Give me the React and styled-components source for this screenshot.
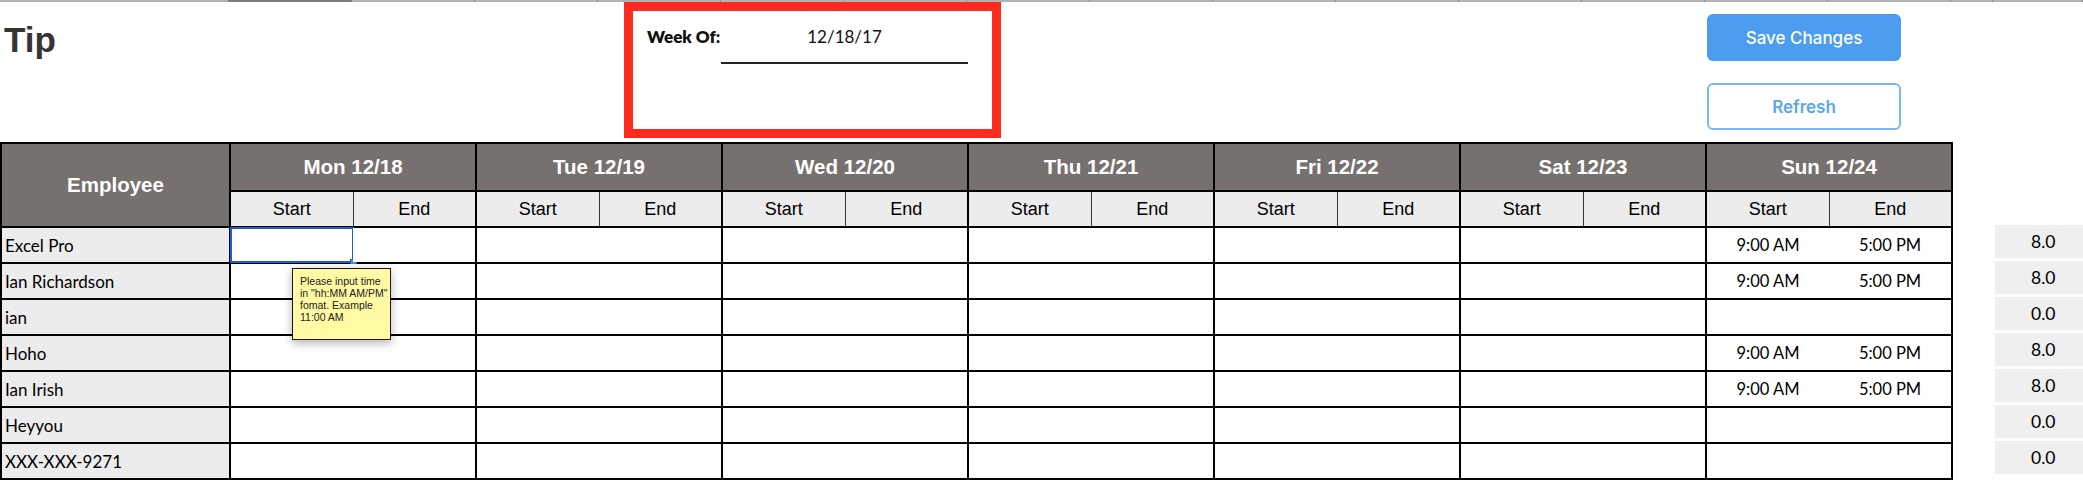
import React from "react";
import styled, { createGlobalStyle } from "styled-components";

const DAYS = [
  "Mon 12/18",
  "Tue 12/19",
  "Wed 12/20",
  "Thu 12/21",
  "Fri 12/22",
  "Sat 12/23",
  "Sun 12/24",
];

const SHIFT = { start: "9:00 AM", end: "5:00 PM" };

const EMPLOYEES = [
  { name: "Excel Pro", sun: SHIFT, total: "8.0" },
  { name: "Ian Richardson", sun: SHIFT, total: "8.0" },
  { name: "ian", sun: null, total: "0.0" },
  { name: "Hoho", sun: SHIFT, total: "8.0" },
  { name: "Ian Irish", sun: SHIFT, total: "8.0" },
  { name: "Heyyou", sun: null, total: "0.0" },
  { name: "XXX-XXX-9271", sun: null, total: "0.0" },
];

// spreadsheet column guides along the top edge
const RULER = [229, ...Array(14).fill(123), 42, 90];

const App = () => {
  return (
    <>
      <GlobalStyle />
      <Page>
        <Ruler>
          {RULER.map((w, i) => (
            <RulerCell key={i} $width={w} $active={i === 1} />
          ))}
        </Ruler>

        <TopArea>
          <Title>Tip</Title>
          <WeekBox>
            <WeekLabel>Week Of:</WeekLabel>
            <WeekField>12/18/17</WeekField>
          </WeekBox>
          <span />
          <Actions>
            <SaveButton type="button">Save Changes</SaveButton>
            <RefreshButton type="button">Refresh</RefreshButton>
          </Actions>
        </TopArea>

        <Body>
          <Sheet>
            <colgroup>
              <col style={{ width: 229 }} />
              {DAYS.map((d) => (
                <React.Fragment key={d}>
                  <col style={{ width: 123 }} />
                  <col style={{ width: 123 }} />
                </React.Fragment>
              ))}
            </colgroup>
            <thead>
              <DayRow>
                <HeadCell rowSpan={2}>Employee</HeadCell>
                {DAYS.map((d) => (
                  <HeadCell key={d} colSpan={2}>
                    {d}
                  </HeadCell>
                ))}
              </DayRow>
              <SubRow>
                {DAYS.map((d) => (
                  <React.Fragment key={d}>
                    <SubCell $first>Start</SubCell>
                    <SubCell>End</SubCell>
                  </React.Fragment>
                ))}
              </SubRow>
            </thead>
            <tbody>
              {EMPLOYEES.map((emp, r) => (
                <DataRow key={emp.name}>
                  <NameCell>{emp.name}</NameCell>
                  {DAYS.map((d, i) => {
                    const shift = i === 6 ? emp.sun : null;
                    const selected = r === 0 && i === 0;
                    return (
                      <React.Fragment key={d}>
                        <TimeCell $first>
                          {shift && shift.start}
                          {selected && (
                            <>
                              <Selection>
                                <Handle />
                              </Selection>
                              <Note>
                                Please input time
                                <br />
                                in "hh:MM AM/PM"
                                <br />
                                fomat. Example
                                <br />
                                11:00 AM
                              </Note>
                            </>
                          )}
                        </TimeCell>
                        <TimeCell>{shift && shift.end}</TimeCell>
                      </React.Fragment>
                    );
                  })}
                </DataRow>
              ))}
            </tbody>
          </Sheet>

          <Totals>
            {EMPLOYEES.map((emp) => (
              <TotalBox key={emp.name}>{emp.total}</TotalBox>
            ))}
          </Totals>
        </Body>
      </Page>
    </>
  );
};

const GlobalStyle = createGlobalStyle`
  html, body {
    margin: 0;
    padding: 0;
    background: #fff;
    overflow: hidden;
  }
  * {
    box-sizing: border-box;
  }
`;

const Page = styled.div`
  width: 2083px;
  display: flex;
  flex-direction: column;
`;

const Ruler = styled.div`
  display: flex;
  height: 2px;
  overflow: hidden;
`;

const RulerCell = styled.div`
  flex: 0 0 ${(p) => p.$width}px;
  height: 2px;
  background: ${(p) => (p.$active ? "#7c7c7c" : "#b2b2b2")};
  border-right: 1px solid #8a8a8a;
`;

const TopArea = styled.div`
  display: grid;
  grid-template-columns: 624px 377px 1fr 194px 182px;
  height: 140px;
  align-items: start;
`;

const Title = styled.h1`
  margin: 20px 0 0 4px;
  font-family: "Liberation Sans", Arial, sans-serif;
  font-size: 35px;
  line-height: 1;
  font-weight: 700;
  color: #353535;
`;

const WeekBox = styled.div`
  height: 136px;
  border: 9px solid #fd2a1f;
  display: flex;
  align-items: flex-start;
  padding: 16px 0 0 14px;
  font-family: Lato, "Liberation Sans", sans-serif;
  font-size: 17px;
  color: #111;
`;

const WeekLabel = styled.div`
  width: 74px;
  font-weight: 800;
  line-height: 1.2;
`;

const WeekField = styled.div`
  width: 247px;
  text-align: center;
  line-height: 1.2;
  padding-bottom: 15px;
  border-bottom: 2px solid #222;
`;

const Actions = styled.div`
  grid-column: 4;
  margin-top: 12px;
  display: flex;
  flex-direction: column;
  gap: 22px;
`;

const Button = styled.button`
  height: 47px;
  width: 194px;
  border-radius: 6px;
  font-family: Inter, "Liberation Sans", sans-serif;
  font-size: 17px;
  font-weight: 500;
  cursor: pointer;
`;

const SaveButton = styled(Button)`
  background: #4c9cf0;
  border: none;
  color: #fff;
`;

const RefreshButton = styled(Button)`
  background: #fff;
  border: 2px solid #7ab5f5;
  color: #5aa6f2;
  font-weight: 600;
`;

const Body = styled.div`
  display: flex;
  align-items: flex-start;
`;

const Sheet = styled.table`
  width: 1951px;
  table-layout: fixed;
  border-collapse: collapse;
  border: 2px solid #000;
  flex: none;
`;

const DayRow = styled.tr`
  height: 48px;
`;

const SubRow = styled.tr`
  height: 36px;
`;

const DataRow = styled.tr`
  height: 36px;
`;

const HeadCell = styled.th`
  padding: 0;
  background: #76716f;
  color: #fff;
  border: 2px solid #000;
  font-family: "Liberation Sans", Arial, sans-serif;
  font-size: 20.5px;
  font-weight: 700;
  text-align: center;
`;

const SubCell = styled.th`
  padding: 0;
  background: #ececec;
  color: #000;
  font-family: "Liberation Sans", Arial, sans-serif;
  font-size: 18px;
  font-weight: 400;
  text-align: center;
  border-bottom: 2px solid #000;
  border-left: ${(p) => (p.$first ? "2px solid #000" : "1px solid #333")};
`;

const NameCell = styled.td`
  padding: 0 0 0 3px;
  background: #ececec;
  border-bottom: 2px solid #000;
  font-family: Lato, "Liberation Sans", sans-serif;
  font-size: 17px;
  color: #000;
  white-space: nowrap;
`;

const TimeCell = styled.td`
  position: relative;
  padding: 0;
  background: #fff;
  border-bottom: 2px solid #000;
  border-left: ${(p) => (p.$first ? "2px solid #000" : "none")};
  font-family: Lato, "Liberation Sans", sans-serif;
  font-size: 16.5px;
  text-align: center;
  color: #000;
`;

const Selection = styled.div`
  position: absolute;
  inset: -1px -1px -1px -1px;
  border: 2px solid #1a5cd6;
`;

const Handle = styled.div`
  position: absolute;
  right: -5px;
  bottom: -5px;
  width: 7px;
  height: 7px;
  background: #4a8fe6;
  border: 1px solid #1a5cd6;
`;

const Note = styled.div`
  position: absolute;
  z-index: 2;
  top: 40px;
  left: 61px;
  width: 99px;
  height: 72px;
  padding: 6px 0 0 7px;
  background: #fffaa3;
  border: 1.5px solid #1a1a1a;
  box-shadow: 0 3px 9px rgba(0, 0, 0, 0.3);
  font-family: "Liberation Sans", Arial, sans-serif;
  font-size: 10.5px;
  line-height: 12px;
  color: #222;
  text-align: left;
  white-space: nowrap;
`;

const Totals = styled.div`
  margin-left: 42px;
  width: 90px;
  padding-top: 83px;
  display: flex;
  flex-direction: column;
  gap: 3px;
`;

const TotalBox = styled.div`
  height: 33px;
  display: flex;
  align-items: center;
  padding-left: 36px;
  background: #efefef;
  font-family: Lato, "Liberation Sans", sans-serif;
  font-size: 17.5px;
  color: #000;
`;

export default App;
